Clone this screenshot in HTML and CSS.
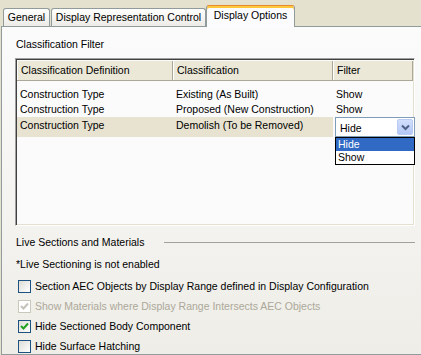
FILE: index.html
```html
<!DOCTYPE html>
<html lang="en">
<head>
    <meta charset="UTF-8">
    <title>Display Options</title>
    <link rel="stylesheet" href="styles.css">
</head>
<body>
    <div class="tabs">
        <div class="tab tab-general">General</div>
        <div class="tab tab-repr">Display Representation Control</div>
        <div class="tab tab-options active">Display Options</div>
    </div>
    <div class="page">
        <div class="group-title">Classification Filter</div>
        <div class="listbox">
            <div class="list-head">
                <div class="head-cell">Classification Definition</div>
                <div class="head-cell">Classification</div>
                <div class="head-cell">Filter</div>
            </div>
            <div class="list-body">
                <div class="list-row">
                    <div class="cell">Construction Type</div>
                    <div class="cell">Existing (As Built)</div>
                    <div class="cell">Show</div>
                </div>
                <div class="list-row">
                    <div class="cell">Construction Type</div>
                    <div class="cell">Proposed (New Construction)</div>
                    <div class="cell">Show</div>
                </div>
                <div class="list-row selected">
                    <div class="cell">Construction Type</div>
                    <div class="cell">Demolish (To be Removed)</div>
                    <div class="cell combo-cell">
                        <div class="combo">
                            <span class="combo-value">Hide</span>
                            <span class="combo-btn">
                                <svg width="9" height="7" viewBox="0 0 9 7"><polyline points="1,1.5 4.5,5 8,1.5" fill="none" stroke="#4D6185" stroke-width="2"/></svg>
                            </span>
                        </div>
                        <div class="combo-list">
                            <div class="combo-item hi">Hide</div>
                            <div class="combo-item">Show</div>
                        </div>
                    </div>
                </div>
            </div>
        </div>

        <div class="section-head">
            <span>Live Sections and Materials</span>
            <span class="rule"></span>
        </div>
        <div class="note">*Live Sectioning is not enabled</div>

        <div class="check-row first">
            <span class="box"></span>
            <span>Section AEC Objects by Display Range defined in Display Configuration</span>
        </div>
        <div class="check-row disabled">
            <span class="box checked">
                <svg width="9" height="9" viewBox="0 0 9 9"><polyline points="1,4 3.5,6.5 8,1.5" fill="none" stroke="#C4C2B8" stroke-width="2"/></svg>
            </span>
            <span>Show Materials where Display Range Intersects AEC Objects</span>
        </div>
        <div class="check-row">
            <span class="box checked">
                <svg width="9" height="9" viewBox="0 0 9 9"><polyline points="1,4 3.5,6.5 8,1.5" fill="none" stroke="#21A121" stroke-width="2"/></svg>
            </span>
            <span>Hide Sectioned Body Component</span>
        </div>
        <div class="check-row">
            <span class="box"></span>
            <span>Hide Surface Hatching</span>
        </div>
    </div>
</body>
</html>
```
FILE: styles.css
```css
body {
    margin: 0;
    background-color: #E4E1CF; /* tab strip beige */
    font-family: "Liberation Sans", Arial, sans-serif;
    font-size: 10.5px;
    color: #000000;
    overflow: hidden;
    height: 355px;
}
.tabs {
    display: flex;
    align-items: flex-end;
    height: 26px;
}
.tab {
    box-sizing: border-box;
    height: 18px;
    border: 1px solid #919B9C;
    border-bottom: none;
    border-radius: 3px 3px 0 0;
    background: linear-gradient(#FFFFFF, #ECEBE6);
    text-align: center;
    line-height: 17px;
}
.tab-general {
    margin-left: 3px;
    width: 47px;
}
.tab-repr {
    margin-left: 1px;
    width: 155px;
}
.tab-options {
    width: 89px;
}
.tab.active {
    position: relative;
    z-index: 1;
    height: 22px;
    margin-bottom: -1px;
    border-top: 1px solid #E68B2C;
    box-shadow: inset 0 2px 0 #FFC73C;
    background: #FCFCFE;
    line-height: 18px;
}
.page {
    box-sizing: border-box;
    width: 422px;
    height: 329px;
    margin-left: 1px;
    border: 1px solid #919B9C;
    background: linear-gradient(#FBFBFC, #EEEDE7);
    padding: 0 7px 0 13px;
}
.group-title {
    height: 13px;
    line-height: 13px;
    padding: 11px 0 7px 1px;
}
.listbox {
    box-sizing: border-box;
    height: 168px;
    padding: 1px;
    border: 1px solid;
    border-color: #A0A0A0 #FFFFFF #FFFFFF #A0A0A0;
    box-shadow: inset 1px 1px 0 #404040, inset -1px -1px 0 #E3E0D0;
    background: #FBFBFB;
}
.list-head {
    display: grid;
    grid-template-columns: 156px 160px 1fr;
    height: 19px;
    margin-top: 1px;
    border-bottom: 1px solid #ACA899;
    background: #EBE8D7;
}
.head-cell {
    border-left: 1px solid #FFFFFF;
    border-right: 1px solid #ACA899;
    padding-left: 3px;
    line-height: 19px;
}
.list-body {
    padding-top: 6px;
}
.list-row {
    display: grid;
    grid-template-columns: 156px 160px 1fr;
    height: 15px;
    line-height: 15px;
}
.list-row .cell {
    padding-left: 3px;
    white-space: nowrap;
}
.list-row.selected {
    height: 17px;
    line-height: 17px;
}
.list-row.selected .cell {
    background: #E7E3D0;
}
.list-row.selected .combo-cell {
    position: relative;
    background: transparent;
    padding-left: 2px;
}
.combo {
    box-sizing: border-box;
    display: flex;
    width: 80px;
    height: 20px;
    border: 1px solid #7F9DB9;
    background: #FFFFFF;
    padding: 1px;
}
.combo-value {
    flex: 1;
    padding-left: 3px;
    line-height: 19px;
}
.combo-btn {
    box-sizing: border-box;
    width: 16px;
    height: 16px;
    border: 1px solid #B9CBF3;
    border-radius: 2px;
    background: linear-gradient(#D2DFFD, #B4C8F6);
    display: flex;
    align-items: center;
    justify-content: center;
}
.combo-list {
    position: absolute;
    left: 2px;
    top: 20px;
    z-index: 2;
    box-sizing: border-box;
    width: 80px;
    border: 1px solid #000000;
    background: #FFFFFF;
}
.combo-item {
    height: 13px;
    line-height: 13px;
    padding-left: 2px;
}
.combo-item.hi {
    background: #316AC5;
    color: #FFFFFF;
}
.section-head {
    display: flex;
    align-items: center;
    height: 13px;
    line-height: 13px;
    margin-top: 10px;
    padding-left: 1px;
}
.section-head .rule {
    flex: 1;
    margin-left: 20px;
    border-top: 1px solid #A0A0A0;
}
.note {
    height: 13px;
    line-height: 13px;
    margin-top: 9px;
    padding-left: 1px;
}
.check-row {
    display: flex;
    align-items: center;
    height: 13px;
    line-height: 13px;
    margin-top: 7px;
    padding-left: 3px;
}
.check-row.first {
    margin-top: 9px;
}
.box {
    box-sizing: border-box;
    width: 13px;
    height: 13px;
    margin-right: 4px;
    border: 1px solid #1C5180;
    background: linear-gradient(135deg, #DCDCD7, #FFFFFF);
    display: flex;
    align-items: center;
    justify-content: center;
}
.check-row.disabled {
    color: #ACA899;
}
.check-row.disabled .box {
    border-color: #CAC8BB;
    background: #FFFFFF;
}
```
